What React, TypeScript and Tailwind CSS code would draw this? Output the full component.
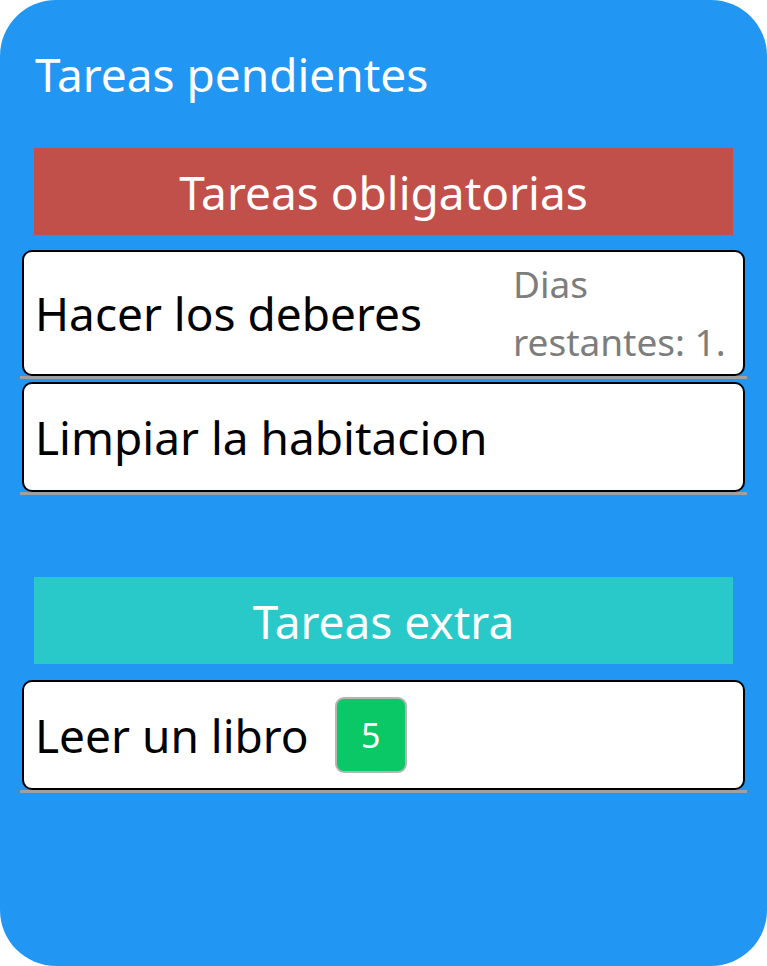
import { FC } from "react";

const FONT = { fontFamily: '"Noto Sans", "Open Sans", sans-serif' };

type Task = { name: string; daysLeft?: string; points?: number };

const MANDATORY: Task[] = [
  { name: "Hacer los deberes", daysLeft: "Dias restantes: 1." },
  { name: "Limpiar la habitacion" },
];

const EXTRA: Task[] = [{ name: "Leer un libro", points: 5 }];

const TaskRow: FC<{ task: Task; tall?: boolean }> = ({ task, tall }) => (
  <div className="mx-[20px] border-b-[3px] border-[#a0a0a0]">
    <div
      className={`mx-[2px] flex items-center justify-between rounded-[10px] border-2 border-black bg-white pl-[11px] ${
        tall ? "h-[126px]" : "h-[110px]"
      }`}
    >
      <div className="flex items-center gap-[26px]">
        <span className="text-[46px] leading-none text-black">{task.name}</span>
        {task.points !== undefined && (
          <span className="flex h-[76px] w-[72px] items-center justify-center rounded-[9px] border-2 border-[#b5b5b5] bg-[#0ac866] text-[34px] text-white">
            {task.points}
          </span>
        )}
      </div>
      {task.daysLeft && (
        <span className="w-[230px] text-[37px] leading-[58px] text-[#7d7d7d]">{task.daysLeft}</span>
      )}
    </div>
  </div>
);

const SectionHeader: FC<{ title: string; color: string }> = ({ title, color }) => (
  <div className={`mx-[34px] flex h-[87px] items-center justify-center ${color}`}>
    <h2 className="text-[46px] leading-none text-white">{title}</h2>
  </div>
);

export default function App() {
  return (
    <div className="h-[966px] w-[767px] bg-white" style={FONT}>
      <section className="flex h-[966px] w-[767px] flex-col rounded-[56px] bg-[#2196f3]">
        {/* Title */}
        <div className="flex h-[148px] items-center pb-[0px] pl-[35px]">
          <h1 className="text-[46px] leading-none text-white">Tareas pendientes</h1>
        </div>

        {/* Mandatory tasks */}
        <SectionHeader title="Tareas obligatorias" color="bg-[#c14f4a]" />
        <div className="mt-[15px] flex flex-col gap-[3px]">
          {MANDATORY.map((task, i) => (
            <TaskRow key={task.name} task={task} tall={i === 0} />
          ))}
        </div>

        {/* Extra tasks */}
        <div className="mt-[82px]">
          <SectionHeader title="Tareas extra" color="bg-[#2ac9c9]" />
        </div>
        <div className="mt-[16px] flex flex-col gap-[3px]">
          {EXTRA.map((task) => (
            <TaskRow key={task.name} task={task} />
          ))}
        </div>
      </section>
    </div>
  );
}
